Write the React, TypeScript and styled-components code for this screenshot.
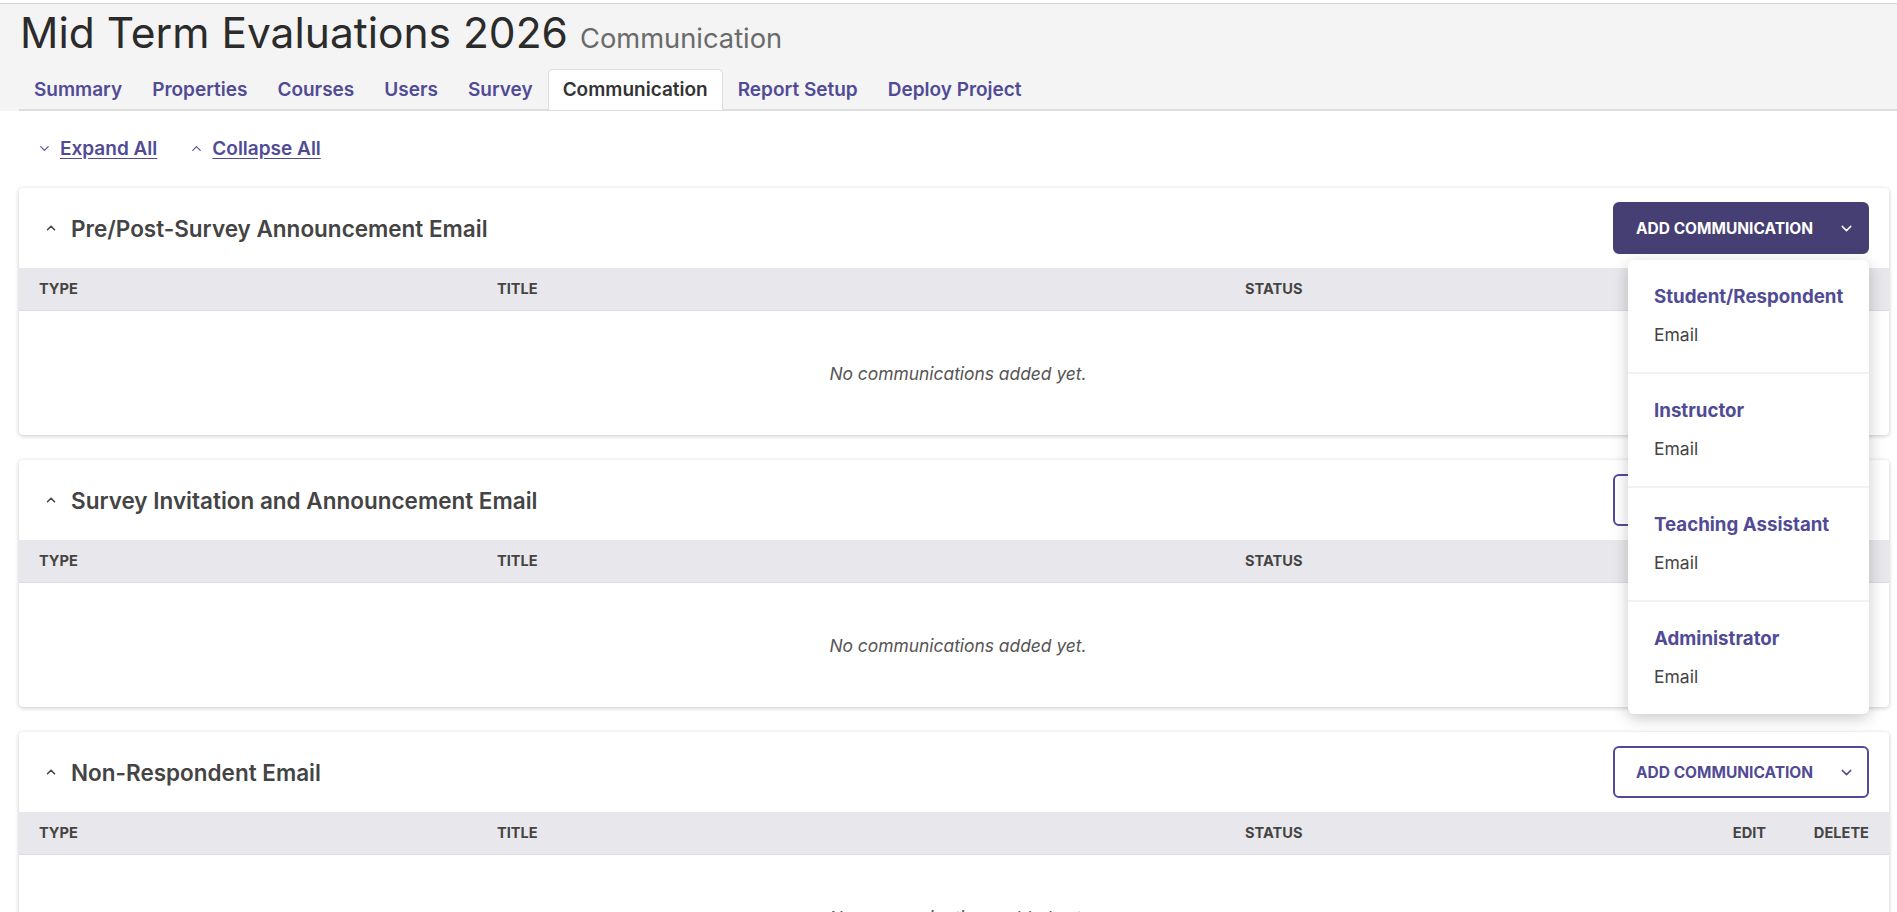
import React from 'react';
import styled, { createGlobalStyle } from 'styled-components';
import { ChevronDown, ChevronUp } from 'lucide-react';

const GlobalStyle = createGlobalStyle`
  body {
    margin: 0;
    background: #fff;
    font-family: Inter, 'Liberation Sans', sans-serif;
    color: #333;
  }
`;

const purple = '#514b96';
const darkPurple = '#463f73';

const tabs = [
  'Summary',
  'Properties',
  'Courses',
  'Users',
  'Survey',
  'Communication',
  'Report Setup',
  'Deploy Project',
];

const sections = [
  { title: 'Pre/Post-Survey Announcement Email', open: true },
  { title: 'Survey Invitation and Announcement Email', open: false },
  { title: 'Non-Respondent Email', open: false },
];

const audiences = ['Student/Respondent', 'Instructor', 'Teaching Assistant', 'Administrator'];

const App = () => {
  return (
    <>
      <GlobalStyle />
      <Header>
        <TitleRow>
          <h1>Mid Term Evaluations 2026</h1>
          <span>Communication</span>
        </TitleRow>
        <TabBar>
          {tabs.map((t) => (
            <Tab key={t} $active={t === 'Communication'}>
              {t}
            </Tab>
          ))}
        </TabBar>
      </Header>
      <Main>
        <Toggles>
          <ToggleLink>
            <ChevronDown size={15} strokeWidth={1.8} />
            <span>Expand All</span>
          </ToggleLink>
          <ToggleLink>
            <ChevronUp size={15} strokeWidth={1.8} />
            <span>Collapse All</span>
          </ToggleLink>
        </Toggles>
        {sections.map((s) => (
          <Card key={s.title}>
            <CardHeader>
              <CardTitle>
                <ChevronUp size={14} strokeWidth={2.6} />
                <h2>{s.title}</h2>
              </CardTitle>
              <ButtonWrap>
                <AddButton $filled={s.open}>
                  <span>ADD COMMUNICATION</span>
                  <ChevronDown size={17} strokeWidth={2} />
                </AddButton>
                {s.open && (
                  <Menu>
                    {audiences.map((a) => (
                      <MenuItem key={a}>
                        <h3>{a}</h3>
                        <p>Email</p>
                      </MenuItem>
                    ))}
                  </Menu>
                )}
              </ButtonWrap>
            </CardHeader>
            <TableHead>
              <div>TYPE</div>
              <div>TITLE</div>
              <div>STATUS</div>
              <div>EDIT</div>
              <div>DELETE</div>
            </TableHead>
            <EmptyRow>No communications added yet.</EmptyRow>
          </Card>
        ))}
      </Main>
    </>
  );
};

export default App;

const Header = styled.header`
  margin-top: 3px;
  border-top: 1px solid #d3d3d3;
  background: #f4f4f4;
`;

const TitleRow = styled.div`
  display: flex;
  align-items: baseline;
  gap: 12px;
  padding: 4px 0 0 20px;
  height: 62px;
  box-sizing: border-box;
  h1 {
    margin: 0;
    font-size: 42.5px;
    line-height: 50px;
    font-weight: 400;
    color: #2b2b2b;
  }
  span {
    font-size: 27.3px;
    color: #6a6a6a;
    font-weight: 400;
  }
`;

const TabBar = styled.nav`
  display: flex;
  margin: 3px 0 0 19px;
  border-bottom: 2px solid #dedede;
  height: 40px;
`;

const Tab = styled.div<{ $active?: boolean }>`
  padding: 0 14px;
  height: 40px;
  line-height: 40px;
  font-size: 19px;
  font-weight: 600;
  color: ${(p) => (p.$active ? '#333' : purple)};
  background: ${(p) => (p.$active ? '#fff' : 'transparent')};
  border: 1px solid ${(p) => (p.$active ? '#dddddd' : 'transparent')};
  border-bottom: none;
  border-radius: 5px 5px 0 0;
  margin-bottom: -2px;
  box-sizing: content-box;
`;

const Main = styled.main`
  padding: 0 8px 40px 19px;
`;

const Toggles = styled.div`
  display: flex;
  gap: 32px;
  height: 24px;
  margin: 25px 0 28px 18px;
  align-items: center;
`;

const ToggleLink = styled.a`
  display: flex;
  align-items: center;
  gap: 8px;
  color: ${purple};
  font-size: 19px;
  font-weight: 600;
  cursor: pointer;
  span {
    text-decoration: underline;
    text-underline-offset: 3px;
  }
`;

const Card = styled.section`
  background: #fff;
  border-radius: 4px;
  box-shadow: 0 1px 4px rgba(0, 0, 0, 0.22);
  margin-bottom: 25px;
`;

const CardHeader = styled.div`
  display: flex;
  align-items: center;
  justify-content: space-between;
  height: 80px;
  padding: 0 20px 0 25px;
`;

const CardTitle = styled.div`
  display: flex;
  align-items: center;
  gap: 13px;
  color: #444;
  h2 {
    margin: 0;
    font-size: 22.5px;
    font-weight: 600;
    color: #444;
  }
`;

const ButtonWrap = styled.div`
  position: relative;
`;

const AddButton = styled.button<{ $filled?: boolean }>`
  display: flex;
  align-items: center;
  justify-content: space-between;
  width: 256px;
  height: 52px;
  padding: 0 12px 0 21px;
  box-sizing: border-box;
  border-radius: 6px;
  border: 2px solid ${(p) => (p.$filled ? darkPurple : purple)};
  background: ${(p) => (p.$filled ? darkPurple : '#fff')};
  color: ${(p) => (p.$filled ? '#fff' : purple)};
  font-family: Inter, 'Liberation Sans', sans-serif;
  font-size: 15.5px;
  font-weight: 700;
  cursor: pointer;
`;

const Menu = styled.div`
  position: absolute;
  top: 58px;
  right: 0;
  width: 241px;
  background: #fff;
  border-radius: 6px;
  box-shadow: 0 4px 16px rgba(0, 0, 0, 0.22);
  z-index: 10;
`;

const MenuItem = styled.div`
  padding: 25px 26px 25px;
  & + & {
    border-top: 2px solid #f1f1f1;
  }
  h3 {
    margin: 0;
    font-size: 18.7px;
    line-height: 24px;
    font-weight: 700;
    color: ${purple};
  }
  p {
    margin: 14px 0 0;
    font-size: 17.5px;
    line-height: 24px;
    color: #444;
  }
`;

const TableHead = styled.div`
  display: grid;
  grid-template-columns: 458px 748px 1fr 81px auto;
  align-items: center;
  height: 42px;
  padding: 0 20px;
  background: #e8e7eb;
  border-bottom: 1px solid #dcdcdc;
  font-size: 14.6px;
  font-weight: 700;
  color: #444;
`;

const EmptyRow = styled.div`
  display: flex;
  align-items: center;
  justify-content: center;
  height: 124px;
  padding-left: 8px;
  font-size: 17.4px;
  font-style: italic;
  color: #555;
`;
